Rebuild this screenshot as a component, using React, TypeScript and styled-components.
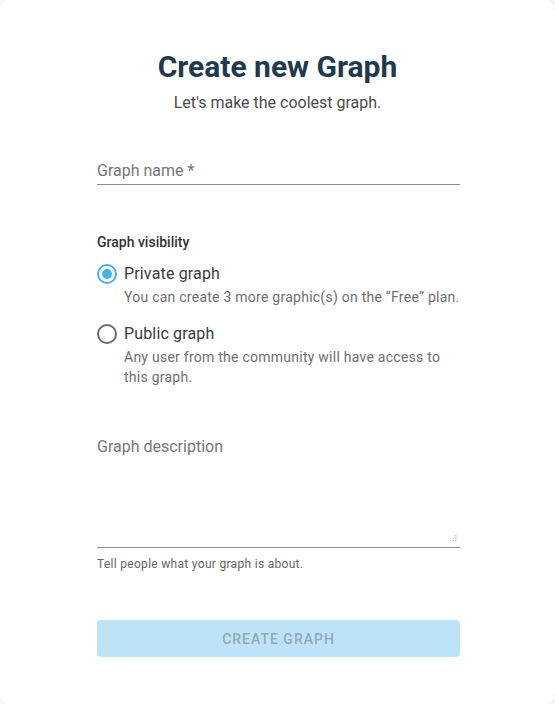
import React from 'react';
import styled, { createGlobalStyle } from 'styled-components';

const GlobalStyle = createGlobalStyle`
  html, body {
    margin: 0;
    padding: 0;
    background: #f4f5f7;
    font-family: Roboto, "Noto Sans", Arial, sans-serif;
  }
  * { box-sizing: border-box; }
`;

const Card = styled.div`
  width: 555px;
  min-height: 704px;
  background: #ffffff;
  border-radius: 10px;
  padding-top: 48px;
  display: flex;
  flex-direction: column;
  align-items: center;
`;

const Title = styled.h1`
  margin: 0;
  font-size: 30px;
  line-height: 38px;
  font-weight: 700;
  color: #1e3a4c;
`;

const Subtitle = styled.p`
  margin: 7px 0 0;
  font-size: 16px;
  line-height: 20px;
  color: #4a4a4a;
`;

const Form = styled.form`
  width: 363px;
  margin-top: 39px;
  margin-left: 2px;
  display: flex;
  flex-direction: column;
`;

const TextInput = styled.input`
  width: 100%;
  height: 33px;
  border: none;
  border-bottom: 1px solid #8c8c8c;
  padding: 5px 0 1px;
  font-family: inherit;
  font-size: 16px;
  color: #333;
  outline: none;
  background: transparent;
  &::placeholder { color: #767676; }
`;

const SectionLabel = styled.div`
  margin-top: 49px;
  font-size: 14px;
  line-height: 16px;
  font-weight: 500;
  color: #333;
`;

const Options = styled.div`
  margin-top: 14px;
  display: flex;
  flex-direction: column;
  gap: 17px;
`;

const OptionRow = styled.label`
  display: grid;
  grid-template-columns: 20px 1fr;
  column-gap: 7px;
  cursor: pointer;
`;

const Radio = styled.span<{ $checked?: boolean }>`
  width: 20px;
  height: 20px;
  border-radius: 50%;
  border: 2px solid ${p => (p.$checked ? '#45b2e8' : '#6b6b6b')};
  display: flex;
  align-items: center;
  justify-content: center;
  &::after {
    content: '';
    width: 10px;
    height: 10px;
    border-radius: 50%;
    background: ${p => (p.$checked ? '#45b2e8' : 'transparent')};
  }
`;

const OptionTitle = styled.span`
  font-size: 16px;
  line-height: 20px;
  letter-spacing: 0.15px;
  color: #3a3a3a;
`;

const OptionText = styled.span`
  grid-column: 2;
  margin-top: 3px;
  font-size: 14px;
  line-height: 20px;
  letter-spacing: 0.25px;
  color: #6e6e6e;
`;

const AreaWrap = styled.div`
  position: relative;
  margin-top: 44px;
`;

const TextArea = styled.textarea`
  display: block;
  width: 100%;
  height: 117px;
  border: none;
  border-bottom: 1px solid #8c8c8c;
  padding: 6px 0 0;
  resize: none;
  font-family: inherit;
  font-size: 16px;
  line-height: 20px;
  color: #333;
  outline: none;
  &::placeholder { color: #767676; }
`;

const Grip = styled.svg`
  position: absolute;
  right: 3px;
  bottom: 6px;
`;

const Helper = styled.div`
  margin-top: 8px;
  font-size: 12px;
  line-height: 16px;
  letter-spacing: 0.3px;
  color: #666;
`;

const SubmitButton = styled.button`
  margin-top: 48px;
  height: 37px;
  border: none;
  border-radius: 4px;
  background: #bde4f6;
  color: #8eaab8;
  font-family: inherit;
  font-size: 14px;
  font-weight: 500;
  letter-spacing: 1px;
  text-transform: uppercase;
  cursor: default;
`;

export default function App() {
  return (
    <>
      <GlobalStyle />
      <Card>
        <Title>Create new Graph</Title>
        <Subtitle>Let's make the coolest graph.</Subtitle>
        <Form onSubmit={e => e.preventDefault()}>
          <TextInput placeholder="Graph name *" />
          <SectionLabel>Graph visibility</SectionLabel>
          <Options>
            <OptionRow>
              <Radio $checked />
              <OptionTitle>Private graph</OptionTitle>
              <OptionText>You can create 3 more graphic(s) on the “Free” plan.</OptionText>
            </OptionRow>
            <OptionRow>
              <Radio />
              <OptionTitle>Public graph</OptionTitle>
              <OptionText>Any user from the community will have access to this graph.</OptionText>
            </OptionRow>
          </Options>
          <AreaWrap>
            <TextArea placeholder="Graph description" />
            <Grip width="7" height="7" viewBox="0 0 7 7">
              <rect x="5" y="0" width="1.5" height="1.5" fill="#c4c4c4" />
              <rect x="5" y="2.5" width="1.5" height="1.5" fill="#c4c4c4" />
              <rect x="2.5" y="2.5" width="1.5" height="1.5" fill="#dadada" />
              <rect x="0" y="5" width="1.5" height="1.5" fill="#dadada" />
              <rect x="2.5" y="5" width="1.5" height="1.5" fill="#c4c4c4" />
              <rect x="5" y="5" width="1.5" height="1.5" fill="#c4c4c4" />
            </Grip>
          </AreaWrap>
          <Helper>Tell people what your graph is about.</Helper>
          <SubmitButton type="submit" disabled>Create graph</SubmitButton>
        </Form>
      </Card>
    </>
  );
}
